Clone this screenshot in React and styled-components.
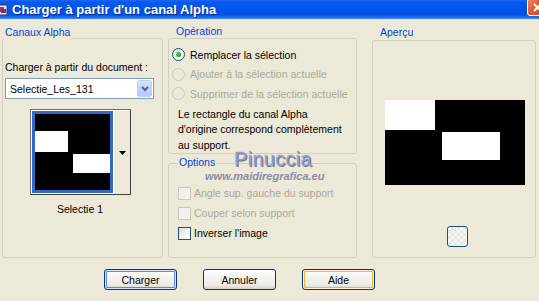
import React from "react";
import styled, { createGlobalStyle } from "styled-components";

const GlobalStyle = createGlobalStyle`
  html, body { margin: 0; padding: 0; background: #ECE9D8; overflow: hidden; }
  body { font-family: "Liberation Sans", Arial, sans-serif; font-size: 10.5px; color: #000; }
`;

const Window = styled.div`
  width: 539px;
  height: 301px;
  position: relative;
  overflow: hidden;
  background: #ECE9D8;
  display: flex;
  flex-direction: column;
`;

const TitleBar = styled.div`
  height: 19px;
  flex: none;
  display: flex;
  align-items: center;
  overflow: hidden;
  background: linear-gradient(
    to bottom,
    #1D68F2 0%,
    #0759EE 12%,
    #0055E8 55%,
    #0052E2 78%,
    #1665F0 88%,
    #3F86F6 100%
  );
`;

const AppIcon = styled.svg`
  flex: none;
  margin-left: -2px;
  width: 10px;
  height: 14px;
`;

const Title = styled.div`
  margin-left: 4px;
  font-family: "Liberation Sans", Arial, sans-serif;
  font-weight: bold;
  font-size: 13px;
  color: #fff;
  text-shadow: 1px 1px 0 #0A2A8C;
  white-space: nowrap;
  flex: 1;
`;

const CloseButton = styled.div`
  flex: none;
  align-self: flex-start;
  width: 21px;
  height: 18px;
  margin-top: -2px;
  margin-right: -9px;
  box-sizing: border-box;
  border: 1px solid #fff;
  border-radius: 3px;
  background: linear-gradient(135deg, #F08A64 0%, #E2582F 45%, #C8401C 100%);
  display: flex;
  align-items: center;
  justify-content: center;
`;

const Body = styled.div`
  flex: 1;
  position: relative;
  display: flex;
  flex-direction: column;
  padding: 19px 0 0 2px;
`;

const Panels = styled.div`
  display: flex;
  align-items: flex-start;
`;

const Column = styled.div`
  display: flex;
  flex-direction: column;
  gap: ${(p) => p.$gap || 0}px;
  margin-left: ${(p) => p.$ml || 0}px;
  margin-top: ${(p) => p.$mt || 0}px;
`;

const Group = styled.div`
  position: relative;
  box-sizing: border-box;
  width: ${(p) => p.$w}px;
  height: ${(p) => p.$h}px;
  border: 1px solid #D0D0BF;
  border-radius: 3px;
  padding: ${(p) => p.$pad};
  display: flex;
  flex-direction: column;
  align-items: flex-start;
`;

const Legend = styled.div`
  position: absolute;
  top: ${(p) => p.$top}px;
  left: ${(p) => p.$left}px;
  padding: 0 1px;
  line-height: 13px;
  font-size: 10.5px;
  color: #0046D5;
  background: #ECE9D8;
  white-space: nowrap;
`;

const Label = styled.div`
  line-height: 13px;
  white-space: nowrap;
`;

const Combo = styled.div`
  margin-top: 4px;
  width: 149px;
  height: 21px;
  box-sizing: border-box;
  border: 1px solid #7F9DB9;
  background: #fff;
  display: flex;
  align-items: center;
  padding-left: 4px;
`;

const ComboArrow = styled.div`
  margin-left: auto;
  margin-right: 1px;
  width: 15px;
  height: 17px;
  box-sizing: border-box;
  border: 1px solid #B9CDF6;
  border-radius: 2px;
  background: linear-gradient(to bottom, #D6E3FD 0%, #C1D3FB 50%, #B2C8F9 100%);
  display: flex;
  align-items: center;
  justify-content: center;
`;

const Thumb = styled.div`
  margin-top: 10px;
  margin-left: 25px;
  display: flex;
  border: 1px solid #6E6E6E;
  border-right-color: #404040;
  border-bottom-color: #404040;
  background: #fff;
`;

const ThumbFrame = styled.div`
  margin: 1px 0 1px 1px;
  border: 3px solid #316AC5;
  display: flex;
  line-height: 0;
`;

const ThumbDrop = styled.div`
  width: 16px;
  background: #ECE9D8;
  border-left: 1px solid #fff;
  border-top: 1px solid #fff;
  display: flex;
  align-items: center;
  justify-content: center;
`;

const Caption = styled.div`
  margin-top: 8px;
  margin-left: 25px;
  width: 100px;
  text-align: center;
  line-height: 13px;
`;

const OptionRow = styled.div`
  height: 20px;
  display: flex;
  align-items: center;
  gap: ${(p) => p.$gap}px;
  color: ${(p) => (p.$disabled ? "#ACA899" : "#000")};
  white-space: nowrap;
`;

const Radio = styled.div`
  position: relative;
  width: 13px;
  height: 13px;
  box-sizing: border-box;
  border-radius: 50%;
  border: 1px solid ${(p) => (p.$disabled ? "#CAC8BB" : "#1C5180")};
  background: ${(p) =>
    p.$disabled
      ? "#ECE9D8"
      : "linear-gradient(135deg, #DCDCD7 0%, #F4F4F0 60%, #FFFFFF 100%)"};
  &::after {
    content: "";
    display: ${(p) => (p.$checked ? "block" : "none")};
    position: absolute;
    left: 3px;
    top: 3px;
    width: 5px;
    height: 5px;
    border-radius: 50%;
    background: radial-gradient(circle at 35% 35%, #5BD65B 0%, #21A121 60%, #1A8A1A 100%);
  }
`;

const Check = styled.div`
  width: 13px;
  height: 13px;
  box-sizing: border-box;
  border: 1px solid ${(p) => (p.$disabled ? "#CAC8BB" : "#1C5180")};
  background: ${(p) =>
    p.$disabled
      ? "#F3F2EA"
      : "linear-gradient(135deg, #DCDCD7 0%, #F2F2EE 55%, #FFFFFF 100%)"};
`;

const Description = styled.div`
  margin-top: 3px;
  margin-left: 6px;
  line-height: 15.5px;
  white-space: nowrap;
`;

const Preview = styled.svg`
  display: block;
  flex: none;
`;

const SmallButton = styled.div`
  margin-top: 41px;
  margin-left: 62px;
  width: 21px;
  height: 21px;
  box-sizing: border-box;
  border: 1px solid #1C4F87;
  border-radius: 3px;
  background-color: #F7F7F4;
  background-image:
    linear-gradient(45deg, #E6E6E2 25%, transparent 25%, transparent 75%, #E6E6E2 75%),
    linear-gradient(45deg, #E6E6E2 25%, transparent 25%, transparent 75%, #E6E6E2 75%);
  background-size: 6px 6px;
  background-position: 0 0, 3px 3px;
`;

const ButtonRow = styled.div`
  margin-top: 11px;
  padding-left: 102px;
  display: flex;
  gap: 26px;
`;

const PushButton = styled.button`
  width: 73px;
  height: 21px;
  box-sizing: border-box;
  padding: 0;
  font-family: "Liberation Sans", Arial, sans-serif;
  font-size: 10.5px;
  color: #000;
  border: 1px solid #003C74;
  border-radius: 3px;
  background: linear-gradient(to bottom, #FFFFFF 0%, #F4F3EE 40%, #ECEBE6 80%, #D6D0C5 100%);
  box-shadow: ${(p) =>
    p.$state === "focus"
      ? "inset 0 0 0 1px #CEE7FF, inset 0 0 0 2px #6982EE"
      : p.$state === "hover"
      ? "inset 0 0 0 1px #FFF0CF, inset 0 0 0 2px #F8B330"
      : "none"};
`;

const WatermarkTitle = styled.div`
  position: absolute;
  left: 234px;
  top: 129px;
  font-family: "Liberation Sans", Arial, sans-serif;
  font-size: 20px;
  letter-spacing: 0.3px;
  color: #9A9DBC;
  text-shadow: 1px 1px 0 #6F7398, -1px -1px 0 #D8D9E6;
  white-space: nowrap;
`;

const WatermarkUrl = styled.div`
  position: absolute;
  left: 205px;
  top: 151px;
  font-family: "Liberation Sans", Arial, sans-serif;
  font-size: 11px;
  font-weight: bold;
  font-style: italic;
  color: #8C8CA4;
  white-space: nowrap;
`;

export default function App() {
  return (
    <>
      <GlobalStyle />
      <Window>
        <TitleBar>
          <AppIcon viewBox="0 0 10 14">
            <rect x="0" y="2" width="9" height="10" fill="#E8E8F0" stroke="#3A3A5A" strokeWidth="1" />
            <rect x="1" y="4" width="5" height="5" fill="#B0306A" />
            <rect x="3" y="6" width="5" height="4" fill="#7A2A9A" />
          </AppIcon>
          <Title>Charger à partir d'un canal Alpha</Title>
          <CloseButton>
            <svg width="9" height="9" viewBox="0 0 9 9">
              <path d="M1 1 L8 8 M8 1 L1 8" stroke="#fff" strokeWidth="2" />
            </svg>
          </CloseButton>
        </TitleBar>

        <Body>
          <Panels>
            <Group $w={161} $h={220} $pad="22px 0 0 2px">
              <Legend $top={-13} $left={1}>Canaux Alpha</Legend>
              <Label>Charger à partir du document :</Label>
              <Combo>
                <span>Selectie_Les_131</span>
                <ComboArrow>
                  <svg width="8" height="6" viewBox="0 0 8 6">
                    <path d="M1 1 L4 4 L7 1" fill="none" stroke="#4D6185" strokeWidth="2" />
                  </svg>
                </ComboArrow>
              </Combo>
              <Thumb>
                <ThumbFrame>
                  <svg width="75" height="76" viewBox="0 0 75 76">
                    <rect width="75" height="76" fill="#000" />
                    <rect x="0" y="17" width="33" height="21" fill="#fff" />
                    <rect x="38" y="40" width="37" height="19" fill="#fff" />
                  </svg>
                </ThumbFrame>
                <ThumbDrop>
                  <svg width="7" height="4" viewBox="0 0 7 4">
                    <path d="M0 0 H7 L3.5 4 Z" fill="#000" />
                  </svg>
                </ThumbDrop>
              </Thumb>
              <Caption>Selectie 1</Caption>
            </Group>

            <Column $ml={5} $gap={9}>
              <Group $w={189} $h={116} $pad="6px 0 0 3px">
                <Legend $top={-14} $left={6}>Opération</Legend>
                <OptionRow $gap={5}>
                  <Radio $checked />
                  Remplacer la sélection
                </OptionRow>
                <OptionRow $gap={5} $disabled>
                  <Radio $disabled />
                  Ajouter à la sélection actuelle
                </OptionRow>
                <OptionRow $gap={5} $disabled>
                  <Radio $disabled />
                  Supprimer de la sélection actuelle
                </OptionRow>
                <Description>
                  Le rectangle du canal Alpha
                  <br />
                  d'origine correspond complètement
                  <br />
                  au support.
                </Description>
              </Group>
              <Group $w={189} $h={95} $pad="19px 0 0 9px">
                <Legend $top={-8} $left={9}>Options</Legend>
                <OptionRow $gap={3} $disabled>
                  <Check $disabled />
                  Angle sup. gauche du support
                </OptionRow>
                <OptionRow $gap={3} $disabled>
                  <Check $disabled />
                  Couper selon support
                </OptionRow>
                <OptionRow $gap={3}>
                  <Check />
                  Inverser l'image
                </OptionRow>
              </Group>
            </Column>

            <Column $ml={15} $mt={2}>
              <Group $w={164} $h={218} $pad="59px 0 0 12px">
                <Legend $top={-15} $left={6}>Aperçu</Legend>
                <Preview width="140" height="85" viewBox="0 0 140 85">
                  <rect width="140" height="85" fill="#000" />
                  <rect x="0" y="0" width="50" height="30" fill="#fff" />
                  <rect x="57" y="32" width="58" height="28" fill="#fff" />
                </Preview>
                <SmallButton />
              </Group>
            </Column>
          </Panels>

          <ButtonRow>
            <PushButton $state="focus">Charger</PushButton>
            <PushButton>Annuler</PushButton>
            <PushButton $state="hover">Aide</PushButton>
          </ButtonRow>

          <WatermarkTitle>Pinuccia</WatermarkTitle>
          <WatermarkUrl>www.maidiregrafica.eu</WatermarkUrl>
        </Body>
      </Window>
    </>
  );
}
